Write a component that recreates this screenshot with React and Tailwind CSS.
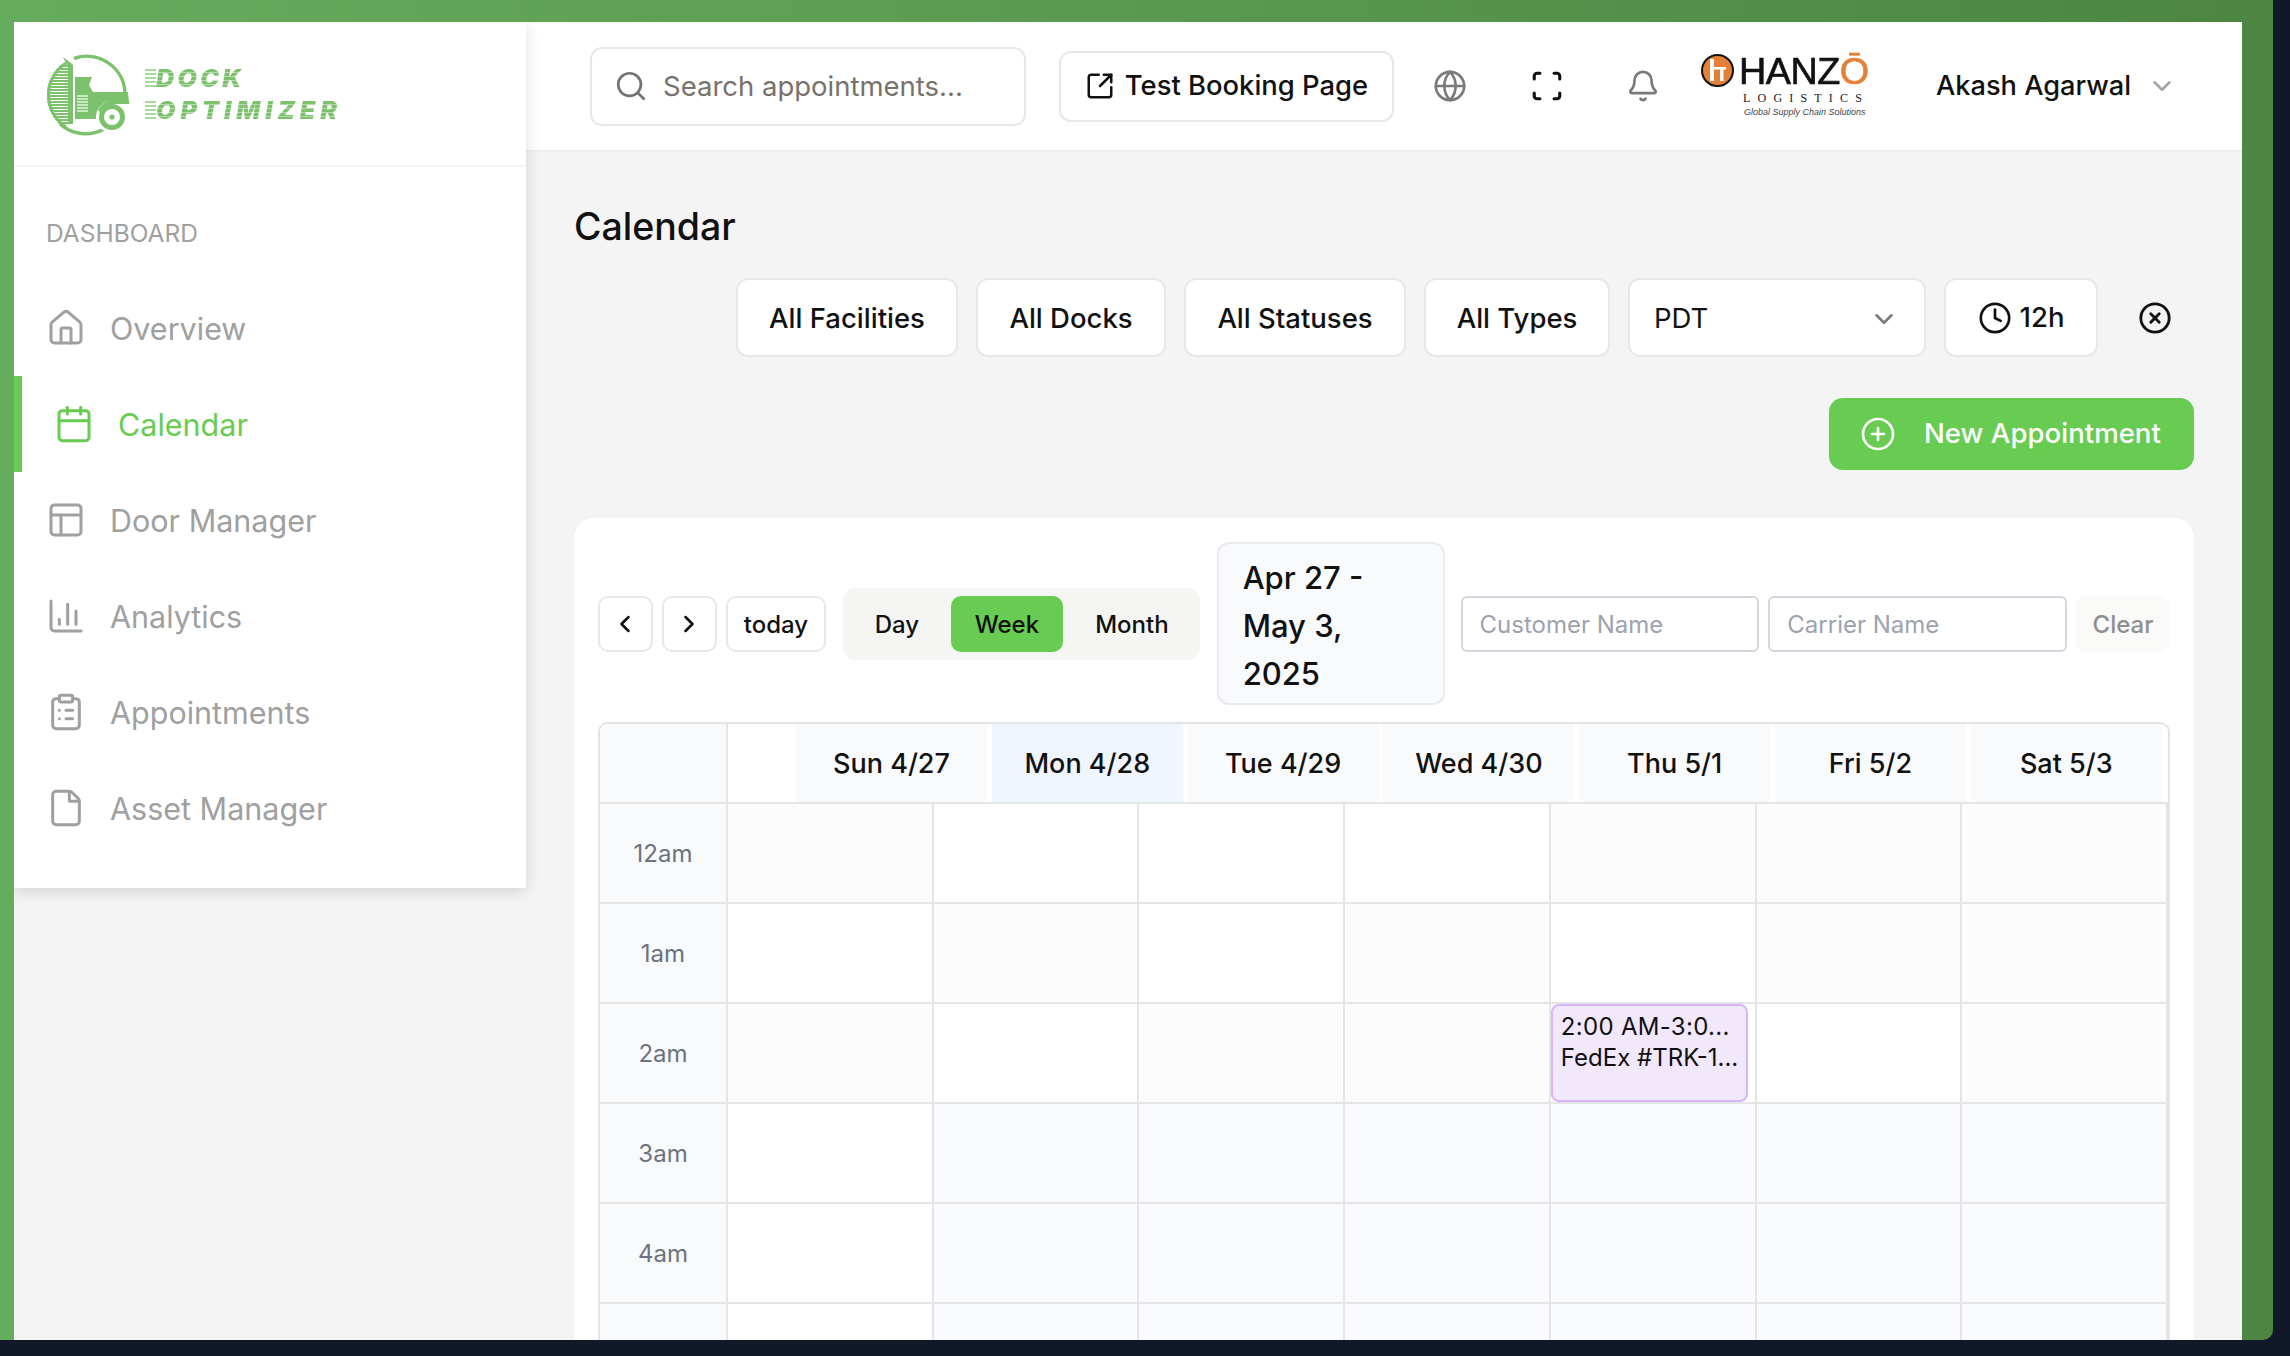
import React from "react";
import {
  Bell,
  Calendar,
  ChartColumn,
  ChevronDown,
  ChevronLeft,
  ChevronRight,
  CirclePlus,
  CircleX,
  ClipboardList,
  Clock,
  File,
  Globe,
  House,
  PanelsTopLeft,
  Scan,
  Search,
  SquareArrowOutUpRight,
} from "lucide-react";

const navItems = [
  { label: "Overview", icon: House },
  { label: "Calendar", icon: Calendar, active: true },
  { label: "Door Manager", icon: PanelsTopLeft },
  { label: "Analytics", icon: ChartColumn },
  { label: "Appointments", icon: ClipboardList },
  { label: "Asset Manager", icon: File },
];

const filters = [
  { label: "All Facilities", width: "w-[222px]" },
  { label: "All Docks", width: "w-[190px]" },
  { label: "All Statuses", width: "w-[222px]" },
  { label: "All Types", width: "w-[186px]" },
];

const days = [
  { label: "Sun 4/27" },
  { label: "Mon 4/28", today: true },
  { label: "Tue 4/29" },
  { label: "Wed 4/30" },
  { label: "Thu 5/1" },
  { label: "Fri 5/2" },
  { label: "Sat 5/3" },
];

// w = white, f = off white, b = blue tint, e = holds the event
const hours = [
  { label: "12am", cells: "fwwwfff" },
  { label: "1am", cells: "wfwfwff" },
  { label: "2am", cells: "fwffewf" },
  { label: "3am", cells: "wbbbbbb" },
  { label: "4am", cells: "wbbbbbb" },
  { label: "", cells: "wbbbbbb" },
];

const cellBg = {
  w: "bg-white",
  f: "bg-[#fcfcfc]",
  b: "bg-[#fafbfe]",
  e: "bg-white",
};

function TruckLogo() {
  const stripes = [];
  for (let y = 14; y < 74; y += 3) stripes.push(y);
  return (
    <svg width="90" height="90" viewBox="0 0 90 90" className="shrink-0 mt-[6px]">
      <defs>
        <clipPath id="truck-circle">
          <circle cx="42.7" cy="43.3" r="40" />
        </clipPath>
      </defs>
      <g fill="none" stroke="#7cc26d">
        <path d="M30 6.5 A38.3 38.3 0 0 1 81 40" strokeWidth="3.5" />
        <path d="M16 72 A38.3 38.3 0 0 0 60 77" strokeWidth="3.5" />
        <path d="M4.5 43 A38.3 38.3 0 0 1 22 11" strokeWidth="3" />
        <path d="M4.5 43 A38.3 38.3 0 0 0 22 75" strokeWidth="3" />
      </g>
      <g clipPath="url(#truck-circle)" stroke="#7cc26d" strokeWidth="2">
        {stripes.map((y) => (
          <line key={y} x1="3" x2="24" y1={y} y2={y} />
        ))}
      </g>
      <path d="M19 5 L27 11 L29 13 V72 H24 V15 Z" fill="#7cc26d" />
      <path
        d="M31 25 H48 L45 33 L49 40 H84 L85 52 H66 Q56 54 54 67 H31 Z"
        fill="#7cc26d"
      />
      <g stroke="#ffffff" strokeWidth="1.2">
        {[44, 47, 50, 53, 56, 59].map((y) => (
          <line key={y} x1="33" x2="44" y1={y} y2={y} />
        ))}
      </g>
      <circle cx="68" cy="65" r="16" fill="#ffffff" />
      <circle cx="68" cy="65" r="10.5" fill="none" stroke="#7cc26d" strokeWidth="5" />
      <path d="M54 58 Q60 47 74 48 H85 V52 H72 Q61 52 56 60 Z" fill="#7cc26d" />
      <circle cx="68" cy="65" r="2.6" fill="#7cc26d" />
    </svg>
  );
}

function LogoWord({ children, spacing }) {
  return (
    <div className="flex items-center">
      <span className="w-[11px] h-[18px] shrink-0 bg-[repeating-linear-gradient(180deg,#a9d8a0_0,#a9d8a0_2px,#ffffff_2px,#ffffff_4px)]" />
      <span
        className={`${spacing} text-[25px] leading-[18px] font-black italic bg-[repeating-linear-gradient(180deg,#7cc26d_0,#7cc26d_3px,#b5dcad_3px,#b5dcad_4px)] bg-clip-text text-transparent`}
      >
        {children}
      </span>
    </div>
  );
}

function HanzoLogo() {
  return (
    <div className="flex flex-col items-start w-[176px] h-[66px] shrink-0">
      <div className="flex items-center h-[34px]">
        <div className="w-[33px] h-[33px] rounded-full bg-[#e47f36] border-2 border-[#111111] flex items-center justify-center shrink-0">
          <svg width="20" height="22" viewBox="0 0 20 22" fill="#ffffff">
            <rect x="2" y="0" width="4" height="22" />
            <rect x="6" y="8" width="12" height="2.5" />
            <rect x="12" y="10" width="3.5" height="12" />
          </svg>
        </div>
        <div className="ml-[5px] mt-[4px] text-[36px] leading-[34px] tracking-[-0.5px] text-[#111111] [-webkit-text-stroke-width:0.6px] font-['Liberation_Sans',sans-serif] whitespace-nowrap scale-x-[1.05] origin-left">
          HANZ<span className="text-[#e47f36]">Ō</span>
        </div>
      </div>
      <div className="ml-[42px] mt-[5px] text-[12px] leading-[12px] tracking-[7.2px] text-[#222222] font-['Liberation_Serif',serif] whitespace-nowrap">
        LOGISTICS
      </div>
      <div className="ml-[43px] mt-[3px] text-[9px] leading-[11px] italic text-[#444444] font-['Liberation_Sans',sans-serif] whitespace-nowrap">
        Global Supply Chain Solutions
      </div>
    </div>
  );
}

function Sidebar() {
  return (
    <aside className="w-[512px] h-[866px] shrink-0 bg-white shadow-[0_4px_14px_rgba(0,0,0,0.13)] z-10 flex flex-col">
      <div className="h-[145px] shrink-0 border-b-2 border-[#f5f5f5] flex items-center pl-[30px]">
        <TruckLogo />
        <div className="ml-[11px] flex flex-col gap-[14px]">
          <LogoWord spacing="tracking-[3.4px]">DOCK</LogoWord>
          <LogoWord spacing="tracking-[5px]">OPTIMIZER</LogoWord>
        </div>
      </div>
      <div className="pl-[32px] mt-[50px] text-[24.5px] leading-[32px] text-[#a0a0a0]">DASHBOARD</div>
      <nav className="mt-[31px] flex flex-col">
        {navItems.map((item) => {
          const Icon = item.icon;
          return (
            <div
              key={item.label}
              className={
                item.active
                  ? "h-[96px] flex items-center pl-[32px] border-l-8 border-[#68cc52] text-[#68cc52]"
                  : "h-[96px] flex items-center pl-[32px] text-[#a0a0a0]"
              }
            >
              <Icon size={40} strokeWidth={1.8} />
              <span className="ml-[24px] pt-[2px] text-[30.5px] leading-[40px]">{item.label}</span>
            </div>
          );
        })}
      </nav>
    </aside>
  );
}

function Topbar() {
  return (
    <header className="h-[128px] shrink-0 bg-white shadow-[0_1px_3px_rgba(0,0,0,0.06)] flex items-center pl-[64px]">
      <div className="w-[436px] h-[79px] shrink-0 border-2 border-[#e8e8e8] rounded-[12px] flex items-center pl-[22px]">
        <Search size={34} strokeWidth={1.9} className="text-[#737373]" />
        <span className="ml-[15px] pt-[2px] text-[27.5px] text-[#78716c]">Search appointments...</span>
      </div>
      <button className="ml-[33px] w-[335px] h-[71px] shrink-0 border-2 border-[#e8e8e8] rounded-[12px] flex items-center justify-center gap-[10px] text-[27.4px] font-medium text-[#111111]">
        <SquareArrowOutUpRight size={30} strokeWidth={2} />
        Test Booking Page
      </button>
      <Globe size={34} strokeWidth={1.9} className="ml-[39px] text-[#7a7a7a] shrink-0" />
      <Scan size={34} strokeWidth={2.2} className="ml-[63px] text-[#111111] shrink-0" />
      <Bell size={34} strokeWidth={1.9} className="ml-[62px] text-[#7a7a7a] shrink-0" />
      <div className="ml-[41px]">
        <HanzoLogo />
      </div>
      <span className="ml-[59px] pt-[1px] text-[27.2px] font-medium text-[#111111] whitespace-nowrap">Akash Agarwal</span>
      <ChevronDown size={30} strokeWidth={2} className="ml-[16px] text-[#a3a3a3] shrink-0" />
    </header>
  );
}

function Filters() {
  return (
    <div className="mt-[24px] flex items-center gap-[18px] justify-end">
      {filters.map((f) => (
        <button
          key={f.label}
          className={`${f.width} h-[79px] pt-[2px] bg-white border-2 border-[#e8e8e8] rounded-[12px] text-[27.5px] font-medium text-[#111111]`}
        >
          {f.label}
        </button>
      ))}
      <div className="w-[298px] h-[79px] pt-[2px] bg-white border-2 border-[#e8e8e8] rounded-[12px] flex items-center justify-between pl-[24px] pr-[25px] text-[27.5px] text-[#111111]">
        PDT
        <ChevronDown size={30} strokeWidth={2} className="text-[#7a7a7a]" />
      </div>
      <button className="w-[154px] h-[79px] bg-white border-2 border-[#e8e8e8] rounded-[12px] flex items-center justify-center gap-[8px] text-[27.5px] font-medium text-[#111111]">
        <Clock size={34} strokeWidth={1.9} />
        12h
      </button>
      <div className="w-[78px] h-[79px] flex items-center justify-center">
        <CircleX size={34} strokeWidth={2} className="text-[#111111]" />
      </div>
    </div>
  );
}

function Toolbar() {
  return (
    <div className="flex items-center h-[163px]">
      <button className="w-[55px] h-[56px] border-2 border-[#e8e8e8] rounded-[10px] flex items-center justify-center text-[#111111]">
        <ChevronLeft size={28} strokeWidth={2.2} />
      </button>
      <button className="ml-[9px] w-[55px] h-[56px] border-2 border-[#e8e8e8] rounded-[10px] flex items-center justify-center text-[#111111]">
        <ChevronRight size={28} strokeWidth={2.2} />
      </button>
      <button className="ml-[9px] w-[100px] h-[56px] pt-[2px] border-2 border-[#e8e8e8] rounded-[10px] text-[24px] font-medium text-[#111111]">
        today
      </button>
      <div className="ml-[17px] w-[357px] h-[72px] bg-[#f5f5f4] rounded-[12px] flex items-center pl-[8px] text-[24px] font-medium text-[#111111]">
        <span className="w-[92px] pt-[2px] text-center">Day</span>
        <span className="ml-[8px] w-[112px] h-[56px] pt-[2px] bg-[#68cc52] rounded-[10px] flex items-center justify-center">Week</span>
        <span className="ml-[8px] w-[122px] pt-[2px] text-center">Month</span>
      </div>
      <div className="ml-[17px] w-[228px] h-[163px] bg-[#f9fafb] border-2 border-[#e8eaee] rounded-[12px] pl-[24px] pr-[20px] py-[10px] text-[31px] leading-[48px] font-medium text-[#111111]">
        Apr 27 - May 3, 2025
      </div>
      <div className="ml-[16px] w-[299px] h-[56px] pt-[2px] border-2 border-[#d4d7dd] rounded-[6px] flex items-center pl-[17px] text-[24px] text-[#9ca3af]">
        Customer Name
      </div>
      <div className="ml-[9px] w-[299px] h-[56px] pt-[2px] border-2 border-[#d4d7dd] rounded-[6px] flex items-center pl-[17px] text-[24px] text-[#9ca3af]">
        Carrier Name
      </div>
      <button className="ml-[9px] w-[94px] h-[56px] pt-[2px] bg-[#fafaf9] rounded-[10px] text-[24px] font-medium text-[#8f8f8f]">
        Clear
      </button>
    </div>
  );
}

function CalendarGrid() {
  return (
    <div className="mt-[17px] w-[1572px] border-t-2 border-x-2 border-[#e5e5e5] rounded-t-[10px]">
      <div className="flex h-[80px] border-b-2 border-[#e5e5e5] shadow-[0_1px_3px_rgba(0,0,0,0.05)]">
        <div className="w-[128px] bg-[#f9fafb] border-r-2 border-[#e5e5e5] rounded-tl-[10px]" />
        <div className="w-[68px]" />
        <div className="flex gap-[4.8px]">
          {days.map((d) => (
            <div
              key={d.label}
              className={
                d.today
                  ? "w-[191px] pt-[2px] flex items-center justify-center bg-[#eff6ff] text-[27px] font-medium text-[#111111]"
                  : "w-[191px] pt-[2px] flex items-center justify-center bg-[#f9fafb] text-[27px] font-medium text-[#111111]"
              }
            >
              {d.label}
            </div>
          ))}
        </div>
      </div>
      {hours.map((h, row) => (
        <div key={row} className="flex h-[100px] border-b-2 border-[#e5e5e5]">
          <div className="w-[128px] shrink-0 pt-[2px] bg-[#f9fafb] border-r-2 border-[#e5e5e5] flex items-center justify-center text-[24px] text-[#6b7280]">
            {h.label}
          </div>
          <div className="grid grid-cols-7 flex-1">
            {h.cells.split("").map((c, i) => (
              <div key={i} className={`${cellBg[c]} border-r-2 border-[#e5e5e5] min-w-0`}>
                {c === "e" && (
                  <div className="w-[197px] h-[98px] bg-[#f1e8fc] border-2 border-[#d8b4fe] rounded-[8px] pl-[8px] pt-[5px] text-[24px] leading-[31px] text-[#111111] whitespace-nowrap">
                    <div className="tracking-[0.3px]">2:00 AM-3:0...</div>
                    <div>FedEx #TRK-1...</div>
                  </div>
                )}
              </div>
            ))}
          </div>
        </div>
      ))}
    </div>
  );
}

export default function App() {
  return (
    <div className="w-[2290px] h-[1356px] bg-[#111827] overflow-hidden font-['Inter',sans-serif]">
      <div className="w-[2273px] h-[1340px] rounded-br-[10px] bg-gradient-to-r from-[#66ac5d] to-[#4c8642] pl-[14px] pr-[31px] pt-[22px]">
        <div className="h-[1318px] flex overflow-hidden bg-[#f4f4f4]">
          <Sidebar />
          <div className="flex-1 min-w-0 flex flex-col">
            <Topbar />
            <main className="px-[48px] pt-[48px]">
              <h1 className="h-[56px] pt-[1px] text-[37.5px] leading-[56px] font-medium text-[#111111]">Calendar</h1>
              <Filters />
              <div className="mt-[41px] flex justify-end">
                <button className="w-[365px] h-[72px] bg-[#68cc52] rounded-[14px] flex items-center pl-[31px] text-[27.6px] font-medium text-white">
                  <CirclePlus size={36} strokeWidth={1.8} />
                  <span className="ml-[28px]">New Appointment</span>
                </button>
              </div>
              <section className="mt-[48px] bg-white rounded-t-[20px] px-[24px] pt-[24px]">
                <Toolbar />
                <CalendarGrid />
              </section>
            </main>
          </div>
        </div>
      </div>
    </div>
  );
}
